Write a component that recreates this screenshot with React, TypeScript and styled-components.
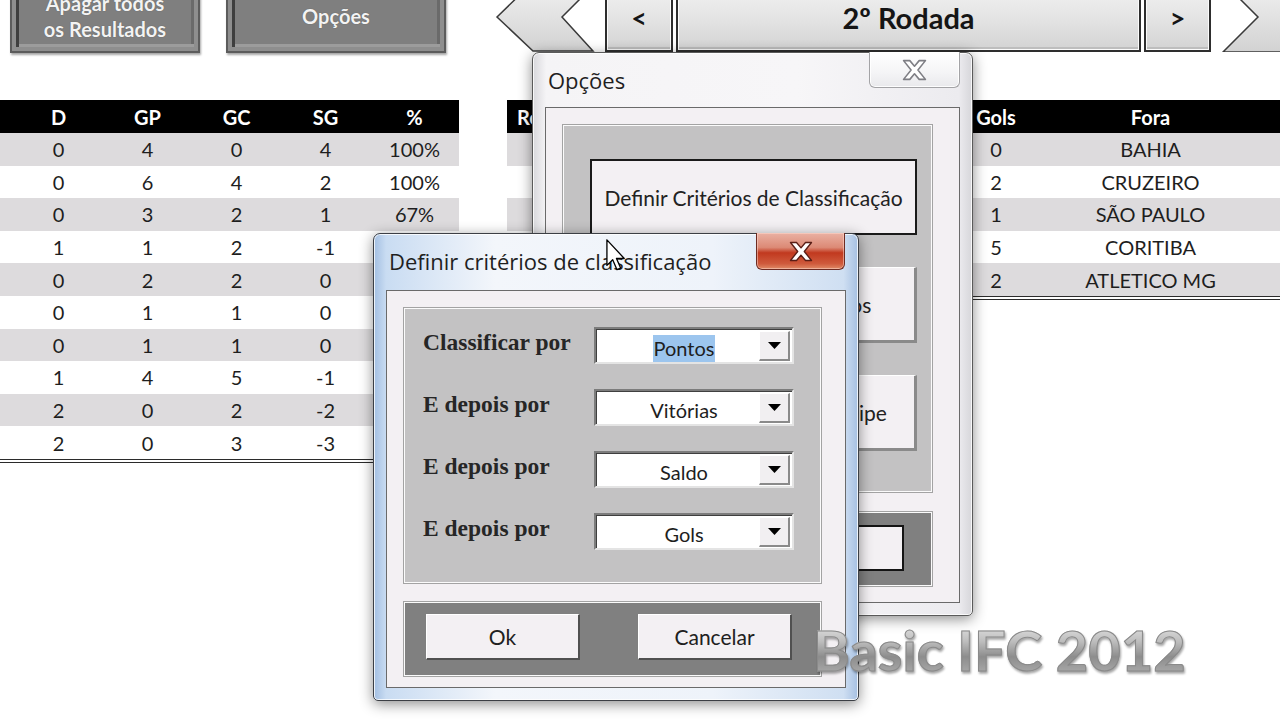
import styled, { createGlobalStyle } from 'styled-components';

const GlobalStyle = createGlobalStyle`
  html, body {
    margin: 0;
    padding: 0;
    background: #fff;
  }
  body {
    width: 1280px;
    height: 720px;
    overflow: hidden;
    font-family: Lato, "Noto Sans", sans-serif;
    color: #1e1e1e;
  }
`

const Page = styled.div`
  position: relative;
  width: 1280px;
  height: 720px;
  overflow: hidden;
  background: #fff;
`

/* ---------- sheet top bar ---------- */

const TopBar = styled.div`
  display: flex;
  align-items: flex-start;
  height: 74px;
  margin-top: -21px;
  > * {
    flex: none;
  }
`

const SheetButton = styled.div<{ $w: number; $ml: number }>`
  width: ${p => p.$w}px;
  height: 74px;
  margin-left: ${p => p.$ml}px;
  box-sizing: border-box;
  border: 2px solid #5c5c5c;
  background: #7f7f7f;
  box-shadow:
    inset 0 0 0 4px #8e8e8e,
    inset 7px 0 0 0 #3e3e3e,
    inset 0 -7px 0 0 #9c9c9c,
    inset -7px 0 0 0 #6a6a6a,
    1px 2px 2px rgba(0, 0, 0, 0.35);
  display: flex;
  flex-direction: column;
  align-items: center;
  justify-content: center;
  color: #f3f3f3;
  font-weight: 700;
  font-size: 20px;
  line-height: 26px;
  text-shadow: 0 0 1px rgba(0, 0, 0, 0.4);
`

const Nav = styled.div`
  display: flex;
  align-items: flex-start;
  margin-left: 49px;
  height: 73px;
  > * {
    flex: none;
  }
`

const Chevron = styled.svg<{ $ml?: number }>`
  display: block;
  margin-left: ${p => p.$ml ?? 0}px;
`

const NavButton = styled.div<{ $w: number; $big?: boolean; $ml?: number }>`
  width: ${p => p.$w}px;
  height: 73px;
  margin-left: ${p => p.$ml ?? 3}px;
  box-sizing: border-box;
  border: 2px solid #2e2e2e;
  box-shadow: inset 0 0 0 1px #fbfbfb, inset 0 -3px 0 0 #bdbdbd;
  background: linear-gradient(#f4f4f4, #e2e2e2 60%, #d3d3d3);
  display: flex;
  align-items: center;
  justify-content: center;
  padding-top: 4px;
  font-weight: 700;
  font-size: ${p => (p.$big ? 29 : 27)}px;
  color: #151515;
`

/* ---------- tables ---------- */

const Sheet = styled.div`
  display: flex;
  align-items: flex-start;
  margin-top: 47px;
  > * {
    flex: none;
  }
`

const Table = styled.div<{ $ml: number }>`
  display: flex;
  flex-direction: column;
  margin-left: ${p => p.$ml}px;
  border-bottom: 4px double #2b2b2b;
`

const Row = styled.div<{ $cols: string; $head?: boolean; $shade?: boolean }>`
  display: grid;
  grid-template-columns: ${p => p.$cols};
  height: ${p => (p.$head ? 33 : 32.6)}px;
  align-items: center;
  background: ${p => (p.$head ? '#000' : p.$shade ? '#dddbdd' : '#fff')};
  color: ${p => (p.$head ? '#fff' : '#1e1e1e')};
  font-weight: ${p => (p.$head ? 700 : 400)};
  font-size: 20px;
`

const Cell = styled.div<{ $left?: boolean }>`
  text-align: ${p => (p.$left ? 'left' : 'center')};
  padding-left: ${p => (p.$left ? 10 : 0)}px;
  white-space: nowrap;
  overflow: hidden;
`

const leftCols = '14px repeat(5, 89px)'
const leftHead = ['', 'D', 'GP', 'GC', 'SG', '%']
const leftRows = [
  ['', '0', '4', '0', '4', '100%'],
  ['', '0', '6', '4', '2', '100%'],
  ['', '0', '3', '2', '1', '67%'],
  ['', '1', '1', '2', '-1', '33%'],
  ['', '0', '2', '2', '0', '33%'],
  ['', '0', '1', '1', '0', '33%'],
  ['', '0', '1', '1', '0', '33%'],
  ['', '1', '4', '5', '-1', '0%'],
  ['', '2', '0', '2', '-2', '0%'],
  ['', '2', '0', '3', '-3', '0%'],
]

const rightCols = '110px 230px 58px 66px 50px 259px'
const rightHead = ['Rodada', 'Casa', 'Gols', 'x', 'Gols', 'Fora']
const rightRows = [
  ['', 'FLAMENGO', '1', 'x', '0', 'BAHIA'],
  ['', 'GRÊMIO', '3', 'x', '2', 'CRUZEIRO'],
  ['', 'SANTOS', '2', 'x', '1', 'SÃO PAULO'],
  ['', 'VASCO', '2', 'x', '5', 'CORITIBA'],
  ['', 'PALMEIRAS', '0', 'x', '2', 'ATLETICO MG'],
]

/* ---------- windows ---------- */

const Window = styled.div<{ $x: number; $y: number; $w: number; $h: number; $active?: boolean }>`
  position: absolute;
  left: ${p => p.$x}px;
  top: ${p => p.$y}px;
  width: ${p => p.$w}px;
  height: ${p => p.$h}px;
  box-sizing: border-box;
  display: flex;
  flex-direction: column;
  padding: 0 12px 12px 12px;
  border: 1px solid ${p => (p.$active ? '#3c3f45' : '#5a5a5a')};
  border-radius: 7px 7px 5px 5px;
  background: ${p =>
    p.$active
      ? 'linear-gradient(90deg, #a3bfe2 0, #c9dcf2 2.5%, #f3f6fb 25%, #eef3fa 70%, #cfdff2 97%, #a6c0e2 100%)'
      : 'linear-gradient(90deg, #d8d8dc 0, #f5f4f6 3%, #f7f6f8 60%, #ecebef 97%, #d6d6da 100%)'};
  box-shadow:
    inset 0 0 0 1px rgba(255, 255, 255, 0.8),
    0 3px 14px rgba(0, 0, 0, 0.45);
`

const TitleBar = styled.div<{ $h: number }>`
  flex: none;
  height: ${p => p.$h}px;
  display: flex;
  align-items: flex-start;
  justify-content: space-between;
  padding-left: 3px;
`

const TitleText = styled.div<{ $top: number }>`
  margin-top: ${p => p.$top}px;
  font-family: "Open Sans", "Noto Sans", sans-serif;
  font-size: 22px;
  color: #1f1f1f;
  white-space: nowrap;
`

const CloseButton = styled.div<{ $red?: boolean; $w: number; $h: number }>`
  flex: none;
  width: ${p => p.$w}px;
  height: ${p => p.$h}px;
  margin-top: -1px;
  margin-right: ${p => (p.$red ? 1 : 0)}px;
  box-sizing: border-box;
  border: 1px solid ${p => (p.$red ? '#6d2b22' : '#a3a3a6')};
  border-top: none;
  border-radius: 0 0 6px 6px;
  background: ${p =>
    p.$red
      ? 'linear-gradient(#eab1a3 0, #dc8a76 40%, #c1391f 55%, #cf5a3c 85%, #e08a66 100%)'
      : 'linear-gradient(#ffffff, #f4f4f6 60%, #e9e9ec)'};
  box-shadow: inset 0 0 0 1px ${p => (p.$red ? 'rgba(255,220,210,0.5)' : 'rgba(255,255,255,0.9)')};
  display: flex;
  align-items: center;
  justify-content: center;
`

const Client = styled.div<{ $pad: string }>`
  flex: 1;
  box-sizing: border-box;
  border: 1px solid #6a6a6a;
  background: #f3f0f3;
  padding: ${p => p.$pad};
  display: flex;
  flex-direction: column;
`

const GroupFrame = styled.div<{ $h: number; $dark?: boolean; $pad: string; $gap: number; $mt?: number }>`
  flex: none;
  height: ${p => p.$h}px;
  margin-top: ${p => p.$mt ?? 0}px;
  box-sizing: border-box;
  border: 1px solid #fbfbfb;
  box-shadow: 0 0 0 1px #a3a3a3;
  background: ${p => (p.$dark ? '#808080' : '#c3c2c3')};
  padding: ${p => p.$pad};
  display: flex;
  flex-direction: column;
  gap: ${p => p.$gap}px;
`

const OptionButton = styled.div<{ $focused?: boolean }>`
  width: 327px;
  height: 76px;
  box-sizing: border-box;
  background: #f3f0f3;
  border-style: solid;
  border-width: ${p => (p.$focused ? '2px' : '1px 3px 3px 1px')};
  border-color: ${p => (p.$focused ? '#1a1a1a' : '#ffffff #8a8a8a #8a8a8a #ffffff')};
  display: flex;
  align-items: center;
  justify-content: center;
  font-size: 21px;
  color: #222;
  white-space: nowrap;
`

const ButtonRow = styled.div<{ $pad: string; $justify: string }>`
  display: flex;
  justify-content: ${p => p.$justify};
  padding: ${p => p.$pad};
`

const FormButton = styled.div<{ $focused?: boolean; $w?: number }>`
  width: ${p => p.$w ?? 154}px;
  height: 46px;
  box-sizing: border-box;
  background: #f3f0f3;
  border-style: solid;
  border-width: ${p => (p.$focused ? '2px' : '1px 2px 2px 1px')};
  border-color: ${p => (p.$focused ? '#141414' : '#ffffff #505050 #505050 #ffffff')};
  display: flex;
  align-items: center;
  justify-content: center;
  font-size: 21px;
  color: #202020;
`

const CriteriaRow = styled.div`
  display: grid;
  grid-template-columns: 171px 200px;
  align-items: center;
  height: 37px;
`

const CriteriaLabel = styled.div`
  font-family: "Liberation Serif", "DejaVu Serif", serif;
  font-weight: 700;
  font-size: 23.5px;
  color: #262626;
  padding-bottom: 6px;
  white-space: nowrap;
`

const Combo = styled.div`
  height: 37px;
  box-sizing: border-box;
  border: 2px solid;
  border-color: #7c7c7c #e4e4e4 #e4e4e4 #7c7c7c;
  box-shadow: inset 1px 1px 0 #3f3f3f;
  background: #fff;
  display: flex;
  align-items: center;
  padding: 1px 2px 0 3px;
`

const ComboText = styled.div`
  flex: 1;
  text-align: center;
  padding-left: 10px;
  padding-top: 3px;
  font-size: 20px;
  color: #1e1e1e;
`

const Selected = styled.span`
  background: #9cc5ee;
  padding: 1px 1px 2px;
`

const DropButton = styled.div`
  width: 31px;
  height: 30px;
  box-sizing: border-box;
  background: #f1eff1;
  border-style: solid;
  border-width: 1px 2px 2px 1px;
  border-color: #ffffff #8a8a8a #8a8a8a #ffffff;
  display: flex;
  align-items: center;
  justify-content: center;
`

const Watermark = styled.div`
  position: absolute;
  left: 813px;
  top: 622px;
  font-family: Lato, "Open Sans", sans-serif;
  font-weight: 700;
  font-size: 56px;
  line-height: 1;
  white-space: nowrap;
  background: linear-gradient(#e6e6e6 0%, #bdbdbd 35%, #8d8d8d 62%, #b0b0b0 100%);
  -webkit-background-clip: text;
  background-clip: text;
  color: transparent;
  -webkit-text-stroke: 1px #8a8a8a;
  filter: drop-shadow(1px 2px 1px rgba(0, 0, 0, 0.35));
`

const Cursor = styled.svg`
  position: absolute;
  left: 606px;
  top: 239px;
`

const CloseGlyph = ({ red, w, h }: { red?: boolean; w: number; h: number }) => (
  <svg width={w} height={h} viewBox="0 0 16 14">
    <path
      d="M1 1 H5 L8 4.6 L11 1 H15 L10.2 7 L15 13 H11 L8 9.4 L5 13 H1 L5.8 7 Z"
      fill="#ffffff"
      stroke={red ? '#5a1e16' : '#7e7e84'}
      strokeWidth={red ? 0.9 : 1}
      strokeLinejoin="round"
    />
  </svg>
)

const DownArrow = () => (
  <svg width="13" height="7" viewBox="0 0 13 7">
    <path d="M0 0 H13 L6.5 7 Z" fill="#000" />
  </svg>
)

const criteria = [
  { label: 'Classificar por', value: 'Pontos', selected: true },
  { label: 'E depois por', value: 'Vitórias' },
  { label: 'E depois por', value: 'Saldo' },
  { label: 'E depois por', value: 'Gols' },
]

export default function App() {
  return (
    <Page>
      <GlobalStyle />

      <TopBar>
        <SheetButton $w={190} $ml={10}>
          <span>Apagar todos</span>
          <span>os Resultados</span>
        </SheetButton>
        <SheetButton $w={220} $ml={26}>Opções</SheetButton>

        <Nav>
          <Chevron width="110" height="73" viewBox="0 0 110 73">
            <defs>
              <linearGradient id="chevL" x1="0" y1="0" x2="0" y2="1">
                <stop offset="0" stopColor="#f2f2f2" />
                <stop offset="1" stopColor="#d2d2d2" />
              </linearGradient>
            </defs>
            <polygon
              points="2,38 38,3 102,3 67,38 98,72 38,72"
              fill="url(#chevL)"
              stroke="#3a3a3a"
              strokeWidth="1.5"
            />
          </Chevron>
          <NavButton $w={68} $ml={0}>&lt;</NavButton>
          <NavButton $w={465} $big>2º Rodada</NavButton>
          <NavButton $w={67}>&gt;</NavButton>
          <Chevron width="70" height="73" viewBox="0 0 70 73" $ml={8}>
            <defs>
              <linearGradient id="chevR" x1="0" y1="0" x2="0" y2="1">
                <stop offset="0" stopColor="#f2f2f2" />
                <stop offset="1" stopColor="#d2d2d2" />
              </linearGradient>
            </defs>
            <polygon
              points="4,3 39,38 4,73 90,73 90,3"
              fill="url(#chevR)"
              stroke="#3a3a3a"
              strokeWidth="1.5"
            />
          </Chevron>
        </Nav>
      </TopBar>

      <Sheet>
        <Table $ml={0}>
          <Row $cols={leftCols} $head>
            {leftHead.map((h, i) => <Cell key={i}>{h}</Cell>)}
          </Row>
          {leftRows.map((r, ri) => (
            <Row key={ri} $cols={leftCols} $shade={ri % 2 === 0}>
              {r.map((c, ci) => <Cell key={ci}>{c}</Cell>)}
            </Row>
          ))}
        </Table>

        <Table $ml={48}>
          <Row $cols={rightCols} $head>
            {rightHead.map((h, i) => <Cell key={i} $left={i === 0}>{h}</Cell>)}
          </Row>
          {rightRows.map((r, ri) => (
            <Row key={ri} $cols={rightCols} $shade={ri % 2 === 0}>
              {r.map((c, ci) => <Cell key={ci} $left={ci === 0}>{c}</Cell>)}
            </Row>
          ))}
        </Table>
      </Sheet>

      {/* Opções userform */}
      <Window $x={532} $y={52} $w={441} $h={564}>
        <TitleBar $h={54}>
          <TitleText $top={12}>Opções</TitleText>
          <CloseButton $w={91} $h={36}>
            <CloseGlyph w={25} h={22} />
          </CloseButton>
        </TitleBar>
        <Client $pad="17px 27px 0 17px">
          <GroupFrame $h={367} $pad="33px 0 0 26px" $gap={32}>
            <OptionButton $focused>Definir Critérios de Classificação</OptionButton>
            <OptionButton>Definir Sistema de Pontos</OptionButton>
            <OptionButton>Alterar Nome de cada Equipe</OptionButton>
          </GroupFrame>
          <GroupFrame $h={74} $dark $pad="0" $gap={0} $mt={20}>
            <ButtonRow $pad="12px 27px 0 0" $justify="flex-end">
              <FormButton $focused $w={160}>Fechar</FormButton>
            </ButtonRow>
          </GroupFrame>
        </Client>
      </Window>

      {/* Definir critérios de classificação userform */}
      <Window $x={373} $y={233} $w={486} $h={468} $active>
        <TitleBar $h={56}>
          <TitleText $top={12}>Definir critérios de classificação</TitleText>
          <CloseButton $red $w={89} $h={37}>
            <CloseGlyph red w={26} h={21} />
          </CloseButton>
        </TitleBar>
        <Client $pad="17px 24px 0 17px">
          <GroupFrame $h={275} $pad="18px 0 0 18px" $gap={25}>
            {criteria.map((c, i) => (
              <CriteriaRow key={i}>
                <CriteriaLabel>{c.label}</CriteriaLabel>
                <Combo>
                  <ComboText>{c.selected ? <Selected>{c.value}</Selected> : c.value}</ComboText>
                  <DropButton>
                    <DownArrow />
                  </DropButton>
                </Combo>
              </CriteriaRow>
            ))}
          </GroupFrame>
          <GroupFrame $h={74} $dark $pad="0" $gap={0} $mt={19}>
            <ButtonRow $pad="11px 28px 0 21px" $justify="space-between">
              <FormButton>Ok</FormButton>
              <FormButton>Cancelar</FormButton>
            </ButtonRow>
          </GroupFrame>
        </Client>
      </Window>

      <Watermark>Basic IFC 2012</Watermark>

      <Cursor width="20" height="33" viewBox="0 0 12 20">
        <path
          d="M0.5 0.5 L0.5 16 L4 12.6 L6.6 18.6 L8.8 17.6 L6.3 11.8 L11 11.8 Z"
          fill="#fff"
          stroke="#000"
          strokeWidth="0.8"
          strokeLinejoin="round"
        />
      </Cursor>
    </Page>
  )
}
